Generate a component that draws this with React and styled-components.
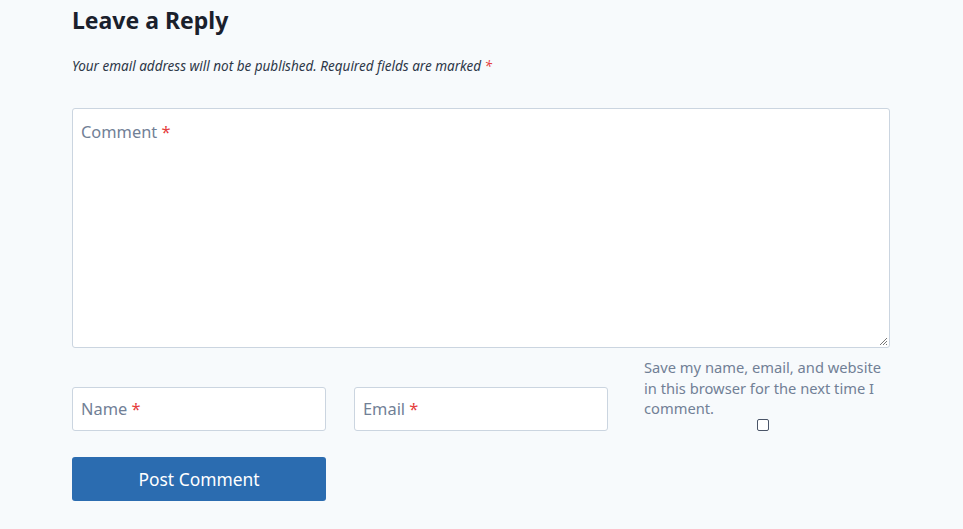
import React from 'react';
import styled, { createGlobalStyle } from 'styled-components';

const GlobalStyle = createGlobalStyle`
  html, body {
    margin: 0;
    padding: 0;
    background: #f7fafc;
  }
  body {
    font-family: "Noto Sans", "Open Sans", sans-serif;
    color: #2d3748;
  }
`;

const Wrapper = styled.div`
  width: 818px;
  padding: 4px 0 28px 72px;
`;

const Title = styled.h3`
  margin: 0;
  font-size: 23px;
  line-height: 32px;
  font-weight: 700;
  color: #1a202c;
`;

const Notes = styled.p`
  margin: 20px 0 0;
  font-size: 13.5px;
  line-height: 20px;
  font-style: italic;
  color: #2d3748;
`;

const Req = styled.span`
  color: #e53e3e;
`;

const Form = styled.form`
  display: flex;
  flex-direction: column;
  margin-top: 32px;
`;

const Box = styled.div`
  position: relative;
  background: #fff;
  border: 1px solid #cbd5e0;
  border-radius: 3px;
  box-sizing: border-box;
  height: ${p => p.$tall ? '240px' : '44px'};
  padding: ${p => p.$tall ? '12px 8px' : '0 8px'};
  display: flex;
  align-items: ${p => p.$tall ? 'flex-start' : 'center'};
`;

const Placeholder = styled.span`
  font-size: 16.4px;
  line-height: 22px;
  color: #718096;
`;

const Grip = styled.svg`
  position: absolute;
  right: 1px;
  bottom: 1px;
`;

const Row = styled.div`
  display: grid;
  grid-template-columns: repeat(3, 1fr);
  column-gap: 28px;
  align-items: end;
  margin-top: 9px;
`;

const Consent = styled.div`
  display: flex;
  flex-direction: column;
  align-items: center;
`;

const ConsentText = styled.label`
  align-self: stretch;
  padding-left: 8px;
  font-size: 14.7px;
  line-height: 20.5px;
  color: #718096;
`;

const Check = styled.span`
  width: 10px;
  height: 10px;
  border: 1px solid #4a5568;
  border-radius: 2px;
  background: #fff;
`;

const Submit = styled.button`
  margin-top: 26px;
  width: 254px;
  height: 44px;
  border: none;
  border-radius: 3px;
  background: #2b6cb0;
  color: #fff;
  font-family: inherit;
  font-size: 17.4px;
  cursor: pointer;
`;

function Field({ label, tall }) {
  return (
    <Box $tall={tall}>
      <Placeholder>{label} <Req>*</Req></Placeholder>
      {tall && (
        <Grip width="9" height="9" viewBox="0 0 9 9">
          <path d="M8 1 L1 8 M8 4 L4 8 M8 7 L7 8" stroke="#777" strokeWidth="1" />
        </Grip>
      )}
    </Box>
  );
}

export default function App() {
  return (
    <>
      <GlobalStyle />
      <Wrapper>
        <Title>Leave a Reply</Title>
        <Notes>Your email address will not be published. Required fields are marked <Req>*</Req></Notes>
        <Form onSubmit={e => e.preventDefault()}>
          <Field label="Comment" tall />
          <Row>
            <Field label="Name" />
            <Field label="Email" />
            <Consent>
              <ConsentText>Save my name, email, and website in this browser for the next time I comment.</ConsentText>
              <Check />
            </Consent>
          </Row>
          <Submit type="submit">Post Comment</Submit>
        </Form>
      </Wrapper>
    </>
  );
}
